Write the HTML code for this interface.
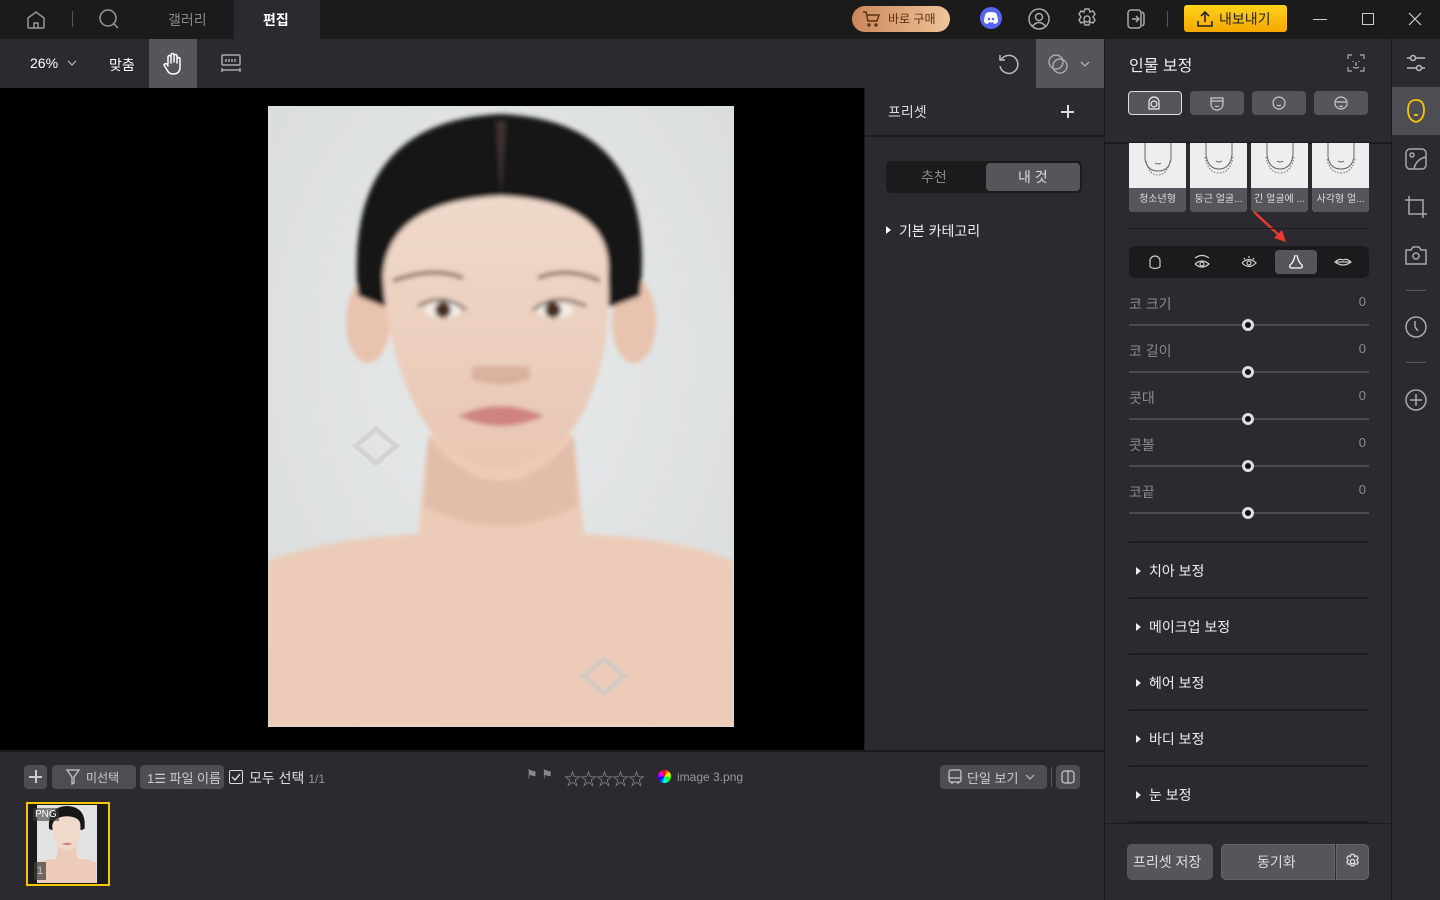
<!DOCTYPE html>
<html><head><meta charset="utf-8">
<style>
*{box-sizing:border-box;margin:0;padding:0}
body{width:1440px;height:900px;overflow:hidden;background:#2b2a30;font-family:"Liberation Sans","Noto Sans CJK KR",sans-serif;color:#ddd;position:relative}
.a{position:absolute}
svg{display:block}
.t{font-size:14px;white-space:nowrap}
.sl{position:absolute;left:1129px;width:240px}
.sl .lb{position:absolute;left:0;top:0;font-size:14px;color:#8a8a90}
.sl .v{position:absolute;right:3px;top:0;font-size:13px;color:#8a8a90}
.sl .tr{position:absolute;left:0;top:30px;width:240px;height:2px;background:#4a4a50}
.sl .k{position:absolute;left:113px;top:25px;width:12px;height:12px;border-radius:50%;background:#111;border:3px solid #ddd}
.sec{position:absolute;left:1129px;width:239px;height:56px;border-top:2px solid #1c1c1f;font-size:14px;color:#eee}
.sec span{position:absolute;left:20px;top:18px}
.sec i{position:absolute;left:7px;top:24px;width:0;height:0;border-left:5px solid #eee;border-top:4px solid transparent;border-bottom:4px solid transparent}
.btn{position:absolute;background:#4d4d54;border-radius:4px}
.card{position:absolute;top:143px;width:57px;height:69px;background:#eeeeee;border-radius:0 0 4px 4px;overflow:hidden}
.card div{position:absolute;left:0;bottom:0;width:100%;height:24px;background:#55555c;color:#ddd;font-size:10px;text-align:center;line-height:24px;white-space:nowrap;overflow:hidden}
</style></head><body>
<!-- title bar -->
<div class="a" style="left:0;top:0;width:1440px;height:39px;background:#1b1b1b"></div>
<div class="a" style="left:234px;top:0;width:86px;height:39px;background:#2b2a30"></div>
<svg class="a" style="left:24px;top:8px" width="24" height="24" viewBox="0 0 24 24" fill="none" stroke="#999" stroke-width="1.5"><path d="M4 10l8-6 8 6v9a1 1 0 0 1-1 1H5a1 1 0 0 1-1-1z"/><path d="M10 20v-5h4v5"/></svg>
<div class="a" style="left:72px;top:11px;width:1px;height:16px;background:#555"></div>
<svg class="a" style="left:97px;top:7px" width="24" height="24" viewBox="0 0 24 24" fill="none" stroke="#999" stroke-width="1.5"><circle cx="11" cy="11" r="8"/><path d="M17 17l4 4"/></svg>
<div class="a t" style="left:168px;top:10px;color:#888">갤러리</div>
<div class="a t" style="left:263px;top:10px;color:#fff;font-weight:bold">편집</div>
<div class="a" style="left:852px;top:6px;width:98px;height:26px;border-radius:13px;background:linear-gradient(90deg,#c9875a,#f0c49a)"></div>
<svg class="a" style="left:862px;top:10px" width="18" height="18" viewBox="0 0 18 18" fill="none" stroke="#5a3015" stroke-width="1.4"><path d="M1 2h3l2 9h9l2-6H5"/><circle cx="7" cy="15" r="1"/><circle cx="14" cy="15" r="1"/></svg>
<div class="a" style="left:888px;top:10px;font-size:12px;color:#5a3015">바로 구매</div>
<div class="a" style="left:980px;top:7px;width:22px;height:22px;border-radius:50%;background:#5865f2"></div>
<svg class="a" style="left:983px;top:11px" width="16" height="14" viewBox="0 0 16 14"><path d="M3 2q5-2 10 0 2 4 2 9-2 2-4 2l-1-2q-2 1-4 0l-1 2q-2 0-4-2 0-5 2-9z" fill="#fff"/><circle cx="6" cy="8" r="1.3" fill="#5865f2"/><circle cx="10" cy="8" r="1.3" fill="#5865f2"/></svg>
<svg class="a" style="left:1027px;top:7px" width="24" height="24" viewBox="0 0 24 24" fill="none" stroke="#aaa" stroke-width="1.5"><circle cx="12" cy="12" r="10"/><circle cx="12" cy="10" r="3.5"/><path d="M5.5 19q6.5-7 13 0"/></svg>
<svg class="a" style="left:1075px;top:7px" width="24" height="24" viewBox="0 0 24 24" fill="none" stroke="#aaa" stroke-width="1.5"><path d="M10 2h4l1 3 3-1 2 3-2 3 2 3-2 3-3-1-1 3h-4l-1-3-3 1-2-3 2-3-2-3 2-3 3 1z"/><circle cx="12" cy="12" r="3"/></svg>
<svg class="a" style="left:1124px;top:7px" width="24" height="24" viewBox="0 0 24 24" fill="none" stroke="#aaa" stroke-width="1.5"><rect x="4" y="3" width="13" height="18" rx="3"/><path d="M18 5q2 1 2 3v8q0 2-2 3"/><path d="M8 12h6M12 9l3 3-3 3"/></svg>
<div class="a" style="left:1167px;top:11px;width:1px;height:16px;background:#555"></div>
<div class="a" style="left:1184px;top:5px;width:103px;height:27px;border-radius:3px;background:linear-gradient(#ffd21a,#f5a800)"></div>
<svg class="a" style="left:1195px;top:9px" width="20" height="20" viewBox="0 0 20 20" fill="none" stroke="#222" stroke-width="1.6"><path d="M10 13V3M6 7l4-4 4 4M3 12v5h14v-5"/></svg>
<div class="a t" style="left:1219px;top:9px;color:#222">내보내기</div>
<div class="a" style="left:1313px;top:19px;width:14px;height:1px;background:#ccc"></div>
<div class="a" style="left:1362px;top:13px;width:12px;height:12px;border:1px solid #ccc"></div>
<svg class="a" style="left:1408px;top:12px" width="14" height="14" viewBox="0 0 14 14" stroke="#ccc" stroke-width="1.2"><path d="M1 1l12 12M13 1L1 13"/></svg>

<!-- toolbar -->
<div class="a t" style="left:30px;top:55px;color:#fff">26%</div>
<svg class="a" style="left:67px;top:59px" width="10" height="8" viewBox="0 0 10 8" fill="none" stroke="#bbb" stroke-width="1.2"><path d="M1 2l4 4 4-4"/></svg>
<div class="a t" style="left:109px;top:55px;color:#fff">맞춤</div>
<div class="a" style="left:149px;top:39px;width:48px;height:49px;background:#55555c"></div>
<svg class="a" style="left:162px;top:52px" width="22" height="24" viewBox="0 0 22 24" fill="none" stroke="#fff" stroke-width="1.5" stroke-linecap="round"><path d="M6 12V5a1.5 1.5 0 0 1 3 0v6M9 10V3a1.5 1.5 0 0 1 3 0v7M12 10V4a1.5 1.5 0 0 1 3 0v7M15 11V7a1.5 1.5 0 0 1 3 0v8q0 7-7 7-4 0-6-4l-3-5q1-2 3-1l1 2"/></svg>
<svg class="a" style="left:219px;top:52px" width="24" height="22" viewBox="0 0 24 22" fill="none" stroke="#aaa" stroke-width="1.5"><rect x="3" y="3" width="18" height="10" rx="1"/><path d="M7 7v3M10 7v3M13 7v3M16 7v3M3 18h18M3 16v4M21 16v4"/></svg>
<svg class="a" style="left:996px;top:52px" width="24" height="24" viewBox="0 0 24 24" fill="none" stroke="#bbb" stroke-width="1.5"><path d="M5 8a9 9 0 1 1-1 6"/><path d="M4 3v5h5"/></svg>
<div class="a" style="left:1036px;top:39px;width:68px;height:49px;background:#55555c"></div>
<svg class="a" style="left:1046px;top:52px" width="24" height="24" viewBox="0 0 24 24" fill="none" stroke="#aaa" stroke-width="1.4"><circle cx="10" cy="10" r="7"/><circle cx="14" cy="14" r="7"/></svg>
<svg class="a" style="left:1080px;top:60px" width="10" height="8" viewBox="0 0 10 8" fill="none" stroke="#bbb" stroke-width="1.2"><path d="M1 2l4 4 4-4"/></svg>

<!-- canvas -->
<div class="a" style="left:0;top:88px;width:864px;height:662px;background:#000"></div>
<svg class="a" style="left:268px;top:106px" width="466" height="621" viewBox="0 0 466 621">
<defs><radialGradient id="bg" cx="0.5" cy="0.4" r="0.7"><stop offset="0" stop-color="#e8ebec"/><stop offset="1" stop-color="#d9dcdd"/></radialGradient>
<linearGradient id="sk" x1="0" y1="0" x2="0" y2="1"><stop offset="0" stop-color="#f0d9cb"/><stop offset="1" stop-color="#e8c6b2"/></linearGradient>
<filter id="bl"><feGaussianBlur stdDeviation="2.5"/></filter></defs>
<rect width="466" height="621" fill="url(#bg)"/>
<g filter="url(#bl)">
<path d="M0 455 Q60 432 150 428 L160 330 L306 330 L316 428 Q410 432 466 455 L466 621 L0 621z" fill="#ecccb8"/>
<path d="M160 330 Q233 420 306 330 L310 400 Q233 440 156 400z" fill="#d8b09b" opacity="0.5"/>
<ellipse cx="100" cy="215" rx="22" ry="42" fill="#e8c3ad"/>
<ellipse cx="366" cy="215" rx="22" ry="42" fill="#e8c3ad"/>
<path d="M90 190 Q75 15 233 8 Q391 15 372 190 L345 200 L115 200z" fill="#141212"/>
<path d="M115 170 Q120 95 233 90 Q346 95 340 170 Q345 270 300 330 Q260 365 233 364 Q206 365 166 330 Q121 270 115 170z" fill="url(#sk)"/>
<path d="M228 15 L233 90 L238 15z" fill="#5a4a44" opacity="0.6"/>
<path d="M125 175 Q165 160 195 172" stroke="#8a6a5a" stroke-width="4" fill="none"/>
<path d="M270 172 Q300 160 332 175" stroke="#8a6a5a" stroke-width="4" fill="none"/>
<ellipse cx="175" cy="204" rx="18" ry="8" fill="#f4eee8"/><circle cx="175" cy="204" r="8" fill="#4a2a1a"/>
<ellipse cx="287" cy="204" rx="18" ry="8" fill="#f4eee8"/><circle cx="285" cy="204" r="8" fill="#4a2a1a"/>
<path d="M150 200 Q175 186 198 204" stroke="#222" stroke-width="2.5" fill="none"/>
<path d="M265 204 Q288 186 318 200" stroke="#222" stroke-width="2.5" fill="none"/>
<path d="M205 260 Q200 275 210 275 Q233 282 256 275 Q266 275 260 260" fill="#d9b19d"/>
<path d="M190 310 Q233 290 276 310 Q233 330 190 310z" fill="#cf8380"/>
</g>
<g fill="none" stroke="#c8c8c8" stroke-width="5" opacity="0.6"><path d="M88 340l20-17 20 17-20 17z"/><path d="M316 570l20-17 20 17-20 17z"/></g>
</svg>

<!-- preset panel -->
<div class="a" style="left:864px;top:88px;width:240px;height:662px;background:#2b2a30;border-left:1px solid #1b1b1b"></div>
<div class="a" style="left:864px;top:135px;width:240px;height:2px;background:#1c1c1f"></div>
<div class="a t" style="left:888px;top:102px;color:#ddd">프리셋</div>
<div class="a" style="left:1061px;top:111px;width:13px;height:1.5px;background:#ddd"></div>
<div class="a" style="left:1067px;top:105px;width:1.5px;height:13px;background:#ddd"></div>
<div class="a" style="left:886px;top:161px;width:196px;height:32px;background:#1b1b1b;border-radius:5px"></div>
<div class="a" style="left:986px;top:163px;width:94px;height:28px;background:#55555c;border-radius:4px"></div>
<div class="a t" style="left:921px;top:167px;color:#888">추천</div>
<div class="a t" style="left:1018px;top:167px;color:#ddd">내 것</div>
<div class="a" style="left:886px;top:226px;border-left:5px solid #fff;border-top:4px solid transparent;border-bottom:4px solid transparent"></div>
<div class="a t" style="left:899px;top:221px;color:#eee">기본 카테고리</div>

<!-- right panel -->
<div class="a" style="left:1104px;top:39px;width:287px;height:861px;background:#2b2a30;border-left:1px solid #1b1b1b"></div>
<div class="a" style="left:1104px;top:142px;width:287px;height:2px;background:#1c1c1f"></div>
<div class="a" style="left:1129px;top:52px;font-size:16px;color:#eee">인물 보정</div>
<svg class="a" style="left:1347px;top:54px" width="18" height="18" viewBox="0 0 18 18" fill="none" stroke="#aaa" stroke-width="1.2"><path d="M1 5V1h4M13 1h4v4M17 13v4h-4M5 17H1v-4M6 7v1M12 7v1M9 8v3h-1M6 13q3 2 6 0"/></svg>
<div class="btn" style="left:1128px;top:91px;width:54px;height:24px;background:#55555c;border:1.5px solid #ddd"></div>
<div class="btn" style="left:1190px;top:91px;width:54px;height:24px;background:#55555c"></div>
<div class="btn" style="left:1252px;top:91px;width:54px;height:24px;background:#55555c"></div>
<div class="btn" style="left:1314px;top:91px;width:54px;height:24px;background:#55555c"></div>
<svg class="a" style="left:1146px;top:95px" width="16" height="16" viewBox="0 0 16 16" fill="none" stroke="#eee" stroke-width="1.2"><path d="M3 14V7a5 5 0 0 1 10 0v7z"/><circle cx="8" cy="9" r="3"/></svg>
<svg class="a" style="left:1209px;top:95px" width="16" height="16" viewBox="0 0 16 16" fill="none" stroke="#ccc" stroke-width="1.2"><path d="M2 3h12v6a6 6 0 0 1-12 0z M2 6h12M6 11q2 1 4 0"/></svg>
<svg class="a" style="left:1271px;top:95px" width="16" height="16" viewBox="0 0 16 16" fill="none" stroke="#ccc" stroke-width="1.2"><circle cx="8" cy="8" r="6"/><path d="M6 10q2 1.5 4 0"/></svg>
<svg class="a" style="left:1333px;top:95px" width="16" height="16" viewBox="0 0 16 16" fill="none" stroke="#ccc" stroke-width="1.2"><circle cx="8" cy="8" r="6"/><path d="M3 7h10M6 11q2 1 4 0"/></svg>

<div class="card" style="left:1129px"><svg class="a" style="left:14px;top:0" width="30" height="36" viewBox="0 0 30 36" fill="none" stroke="#666" stroke-width="1"><path d="M2 0v16q2 12 13 12t13-12V0"/><path d="M3 18q3 14 12 14t12-14" stroke-dasharray="1.5 1.5"/><path d="M12 20q3 2 6 0"/></svg><div>청소년형</div></div>
<div class="card" style="left:1190px"><svg class="a" style="left:14px;top:0" width="30" height="36" viewBox="0 0 30 36" fill="none" stroke="#666" stroke-width="1"><path d="M2 0v12q2 14 13 14t13-14V0"/><path d="M1 14q3 16 14 16t14-16" stroke-dasharray="1.5 1.5"/><path d="M12 18q3 2 6 0"/></svg><div>둥근 얼굴...</div></div>
<div class="card" style="left:1251px"><svg class="a" style="left:14px;top:0" width="30" height="36" viewBox="0 0 30 36" fill="none" stroke="#666" stroke-width="1"><path d="M2 0v12q2 14 13 14t13-14V0"/><path d="M1 14q3 16 14 16t14-16" stroke-dasharray="1.5 1.5"/><path d="M12 18q3 2 6 0"/></svg><div>긴 얼굴에 ...</div></div>
<div class="card" style="left:1312px"><svg class="a" style="left:14px;top:0" width="30" height="36" viewBox="0 0 30 36" fill="none" stroke="#666" stroke-width="1"><path d="M2 0v14q2 12 13 12t13-12V0"/><path d="M1 16q3 14 14 14t14-14" stroke-dasharray="1.5 1.5"/><path d="M12 18q3 2 6 0"/></svg><div>사각형 얼...</div></div>
<svg class="a" style="left:1250px;top:210px" width="40" height="34" viewBox="0 0 40 34"><path d="M4 2L30 26" stroke="#e8392c" stroke-width="2.5"/><path d="M24 28L36 32 32 20z" fill="#e8392c"/></svg>
<div class="a" style="left:1129px;top:228px;width:240px;height:1px;background:#1c1c1f"></div>
<div class="a" style="left:1129px;top:246px;width:240px;height:32px;background:#1b1b1d;border-radius:6px"></div>
<div class="a" style="left:1275px;top:250px;width:42px;height:24px;background:#55555c;border-radius:4px"></div>
<svg class="a" style="left:1146px;top:253px" width="18" height="18" viewBox="0 0 18 18" fill="none" stroke="#ccc" stroke-width="1.2"><path d="M4 14V8a5 5 0 0 1 10 0v6M4 14q5 3 10 0"/></svg>
<svg class="a" style="left:1193px;top:253px" width="18" height="18" viewBox="0 0 18 18" fill="none" stroke="#ccc" stroke-width="1.2"><path d="M2 5q7-5 14 0M2 11q7-6 14 0q-7 6-14 0"/><circle cx="9" cy="11" r="2"/></svg>
<svg class="a" style="left:1240px;top:253px" width="18" height="18" viewBox="0 0 18 18" fill="none" stroke="#ccc" stroke-width="1.2"><path d="M2 10q7-7 14 0q-7 7-14 0"/><circle cx="9" cy="10" r="2"/><path d="M9 3v2M4 5l1 1.5M14 5l-1 1.5"/></svg>
<svg class="a" style="left:1287px;top:253px" width="18" height="18" viewBox="0 0 18 18" fill="none" stroke="#fff" stroke-width="1.3"><path d="M8 2q-1 7-5 10q-1 3 2 3h8q3 0 2-3q-4-3-5-10"/></svg>
<svg class="a" style="left:1334px;top:253px" width="18" height="18" viewBox="0 0 18 18" fill="none" stroke="#ccc" stroke-width="1.2"><path d="M1 9q4-4 8-2q4-2 8 2q-8 6-16 0zM1 9h16"/></svg>

<div class="sl" style="top:294px"><span class="lb">코 크기</span><span class="v">0</span><div class="tr"></div><div class="k"></div></div>
<div class="sl" style="top:341px"><span class="lb">코 길이</span><span class="v">0</span><div class="tr"></div><div class="k"></div></div>
<div class="sl" style="top:388px"><span class="lb">콧대</span><span class="v">0</span><div class="tr"></div><div class="k"></div></div>
<div class="sl" style="top:435px"><span class="lb">콧볼</span><span class="v">0</span><div class="tr"></div><div class="k"></div></div>
<div class="sl" style="top:482px"><span class="lb">코끝</span><span class="v">0</span><div class="tr"></div><div class="k"></div></div>

<div class="sec" style="top:541px"><i></i><span>치아 보정</span></div>
<div class="sec" style="top:597px"><i></i><span>메이크업 보정</span></div>
<div class="sec" style="top:653px"><i></i><span>헤어 보정</span></div>
<div class="sec" style="top:709px"><i></i><span>바디 보정</span></div>
<div class="sec" style="top:765px"><i></i><span>눈 보정</span></div>
<div class="a" style="left:1129px;top:821px;width:239px;height:2px;background:#1c1c1f"></div>
<div class="a" style="left:1104px;top:823px;width:287px;height:77px;background:#2b2a30;border-top:1px solid #1b1b1b;border-left:1px solid #1b1b1b"></div>
<div class="btn" style="left:1127px;top:844px;width:86px;height:36px;background:#55555c;border-radius:5px"></div>
<div class="a t" style="left:1133px;top:852px;color:#ddd">프리셋 저장</div>
<div class="btn" style="left:1221px;top:844px;width:114px;height:36px;background:#55555c;border:1px solid #666;border-radius:5px 0 0 5px"></div>
<div class="a t" style="left:1257px;top:852px;color:#ddd">동기화</div>
<div class="btn" style="left:1336px;top:844px;width:33px;height:36px;background:#55555c;border:1px solid #666;border-radius:0 5px 5px 0"></div>
<svg class="a" style="left:1344px;top:853px" width="17" height="17" viewBox="0 0 24 24" fill="none" stroke="#ddd" stroke-width="1.8"><path d="M10 2h4l1 3 3-1 2 3-2 3 2 3-2 3-3-1-1 3h-4l-1-3-3 1-2-3 2-3-2-3 2-3 3 1z"/><circle cx="12" cy="12" r="3"/></svg>

<!-- sidebar -->
<div class="a" style="left:1391px;top:39px;width:49px;height:861px;background:#2b2a30;border-left:1px solid #1b1b1b"></div>
<div class="a" style="left:1392px;top:87px;width:48px;height:48px;background:#4d4d54"></div>
<svg class="a" style="left:1404px;top:51px" width="24" height="24" viewBox="0 0 24 24" fill="none" stroke="#bbb" stroke-width="1.5"><path d="M3 7h18M3 17h18"/><circle cx="9" cy="7" r="2.5" fill="#2b2a30"/><circle cx="15" cy="17" r="2.5" fill="#2b2a30"/></svg>
<svg class="a" style="left:1404px;top:98px" width="24" height="26" viewBox="0 0 24 26" fill="none" stroke="#f5c400" stroke-width="1.8"><path d="M12 2q8 0 8 10t-8 12q-8-2-8-12T12 2z"/><path d="M10 17h4"/></svg>
<svg class="a" style="left:1404px;top:147px" width="24" height="24" viewBox="0 0 24 24" fill="none" stroke="#aaa" stroke-width="1.5"><rect x="2" y="2" width="20" height="20" rx="4"/><circle cx="8" cy="8" r="2"/><path d="M10 22q2-10 12-12"/></svg>
<svg class="a" style="left:1404px;top:195px" width="24" height="24" viewBox="0 0 24 24" fill="none" stroke="#aaa" stroke-width="1.5"><path d="M5 1v18h18M1 5h18v18"/></svg>
<svg class="a" style="left:1404px;top:243px" width="24" height="24" viewBox="0 0 24 24" fill="none" stroke="#aaa" stroke-width="1.5"><path d="M2 7h5l2-3h6l2 3h5v14H2z"/><circle cx="12" cy="13" r="3"/></svg>
<div class="a" style="left:1406px;top:290px;width:20px;height:1px;background:#555"></div>
<svg class="a" style="left:1404px;top:315px" width="24" height="24" viewBox="0 0 24 24" fill="none" stroke="#aaa" stroke-width="1.5"><circle cx="12" cy="12" r="10"/><path d="M11 6v6l3 4"/></svg>
<div class="a" style="left:1406px;top:362px;width:20px;height:1px;background:#555"></div>
<svg class="a" style="left:1404px;top:388px" width="24" height="24" viewBox="0 0 24 24" fill="none" stroke="#aaa" stroke-width="1.5"><circle cx="12" cy="12" r="10"/><path d="M12 6v12M6 12h12"/></svg>

<!-- bottom -->
<div class="a" style="left:0;top:750px;width:1104px;height:150px;background:#2b2a30;border-top:2px solid #1b1b1b"></div>
<div class="btn" style="left:24px;top:765px;width:23px;height:24px"></div>
<div class="a" style="left:29px;top:776px;width:13px;height:1.5px;background:#ccc"></div>
<div class="a" style="left:35px;top:770px;width:1.5px;height:13px;background:#ccc"></div>
<div class="btn" style="left:52px;top:765px;width:84px;height:24px"></div>
<svg class="a" style="left:66px;top:769px" width="14" height="16" viewBox="0 0 14 16" fill="none" stroke="#ccc" stroke-width="1.2"><path d="M1 1h12L8 8v6l-2 1V8z"/></svg>
<div class="a" style="left:86px;top:769px;font-size:12px;color:#ccc">미선택</div>
<div class="btn" style="left:140px;top:765px;width:84px;height:24px"></div>
<div class="a" style="left:147px;top:768px;font-size:13px;color:#ccc">1☰ 파일 이름</div>
<div class="a" style="left:229px;top:770px;width:14px;height:14px;border:1.5px solid #ddd;border-radius:2px"></div>
<svg class="a" style="left:231px;top:772px" width="10" height="10" viewBox="0 0 10 10" fill="none" stroke="#ddd" stroke-width="1.4"><path d="M1 5l3 3 5-6"/></svg>
<div class="a t" style="left:249px;top:768px;color:#ddd">모두 선택 <span style="font-size:12px;color:#999">1/1</span></div>
<div class="a" style="left:526px;top:767px;font-size:13px;color:#888">⚑ ⚑</div>
<div class="a" style="left:564px;top:765px;font-size:17px;color:#999;letter-spacing:-1px">☆☆☆☆☆</div>
<div class="a" style="left:658px;top:770px;width:13px;height:13px;border-radius:50%;background:conic-gradient(red,yellow,lime,cyan,blue,magenta,red)"></div>
<div class="a" style="left:677px;top:770px;font-size:12px;color:#999">image 3.png</div>
<div class="btn" style="left:940px;top:765px;width:107px;height:24px"></div>
<svg class="a" style="left:948px;top:769px" width="14" height="16" viewBox="0 0 14 16" fill="none" stroke="#ccc" stroke-width="1.2"><rect x="1" y="1" width="12" height="12" rx="2"/><path d="M1 9h12M4 13v2M10 13v2"/></svg>
<div class="a" style="left:967px;top:768px;font-size:13px;color:#ccc">단일 보기</div>
<svg class="a" style="left:1025px;top:773px" width="10" height="8" viewBox="0 0 10 8" fill="none" stroke="#bbb" stroke-width="1.2"><path d="M1 2l4 4 4-4"/></svg>
<div class="a" style="left:1051px;top:767px;width:1px;height:20px;background:#555"></div>
<div class="btn" style="left:1056px;top:765px;width:24px;height:24px"></div>
<svg class="a" style="left:1061px;top:770px" width="14" height="14" viewBox="0 0 14 14" fill="none" stroke="#ccc" stroke-width="1.2"><rect x="1" y="1" width="12" height="12" rx="3"/><path d="M7 1v12"/></svg>
<div class="a" style="left:26px;top:802px;width:84px;height:84px;border:2px solid #f7c600;background:#1b1b1b"></div>
<div class="a" style="left:37px;top:805px;width:60px;height:78px;background:#e2e4e4"></div>
<svg class="a" style="left:37px;top:805px" width="60" height="78" viewBox="0 0 466 621"><g filter="url(#bl)"><path d="M0 455 Q60 432 150 428 L160 330 L306 330 L316 428 Q410 432 466 455 L466 621 L0 621z" fill="#ecccb8"/><path d="M90 190 Q75 15 233 8 Q391 15 372 190 L345 200 L115 200z" fill="#141212"/><path d="M115 170 Q120 95 233 90 Q346 95 340 170 Q345 270 300 330 Q260 365 233 364 Q206 365 166 330 Q121 270 115 170z" fill="#f0d9cb"/><path d="M190 310 Q233 290 276 310 Q233 330 190 310z" fill="#cf8380"/></g></svg>
<div class="a" style="left:33px;top:808px;font-size:10px;color:#fff;background:rgba(60,60,60,.6);padding:1px 2px">PNG</div>
<div class="a" style="left:34px;top:862px;width:12px;height:18px;background:rgba(60,60,60,.7);font-size:11px;color:#ccc;text-align:center;line-height:18px">1</div>
</body></html>
